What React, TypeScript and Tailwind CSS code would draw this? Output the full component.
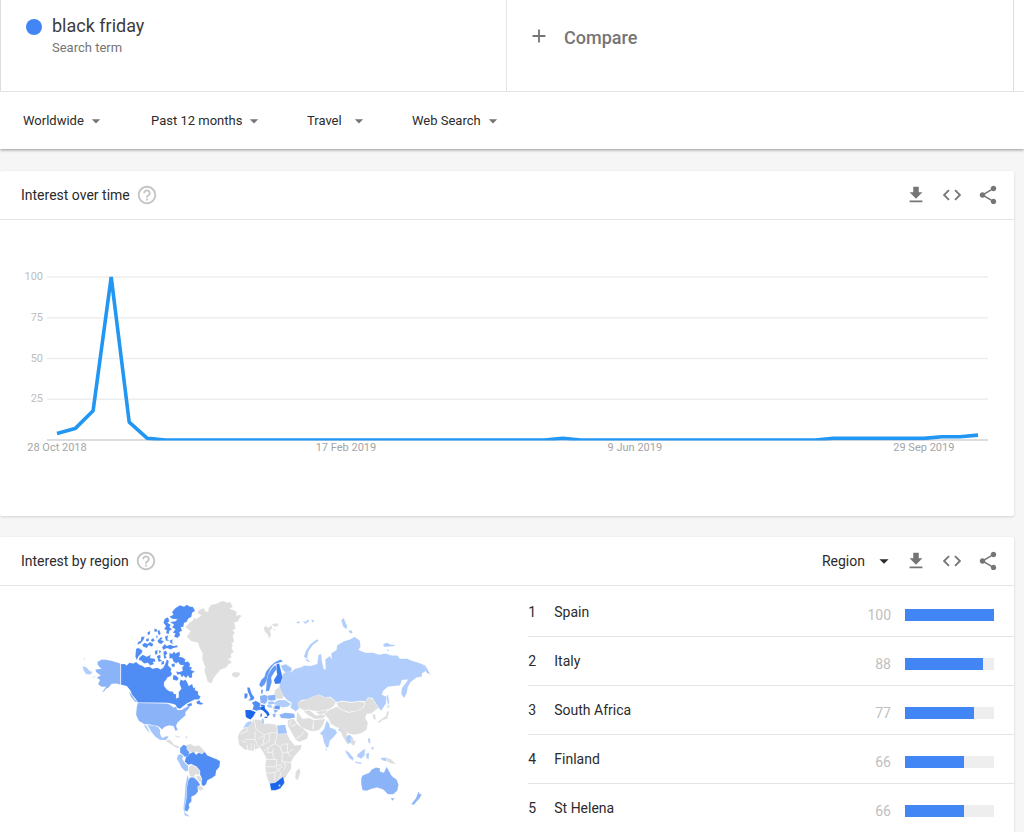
import type { ReactNode } from "react";
import {
  MdAdd,
  MdArrowDropDown,
  MdCode,
  MdGetApp,
  MdHelpOutline,
  MdShare,
} from "react-icons/md";

interface RegionRow {
  name: string;
  value: number;
}

const REGIONS: RegionRow[] = [
  { name: "Spain", value: 100 },
  { name: "Italy", value: 88 },
  { name: "South Africa", value: 77 },
  { name: "Finland", value: 66 },
  { name: "St Helena", value: 66 },
];

const FILTERS = [
  { id: "geo", label: "Location", value: "Worldwide" },
  { id: "time", label: "Time range", value: "Past 12 months" },
  { id: "category", label: "Category", value: "Travel" },
  { id: "property", label: "Search type", value: "Web Search" },
];

// Weekly interest, 28 Oct 2018 onwards. Weeks not listed are 0.
const WEEKS = 52;
const INTEREST: Record<number, number> = {
  0: 4, 1: 7, 2: 18, 3: 100, 4: 11, 5: 1,
  28: 1,
  43: 1, 44: 1, 45: 1, 46: 1, 47: 1, 48: 1, 49: 2, 50: 2, 51: 3,
};

const X_LABELS = [
  { week: 0, text: "28 Oct 2018" },
  { week: 16, text: "17 Feb 2019" },
  { week: 32, text: "9 Jun 2019" },
  { week: 48, text: "29 Sep 2019" },
];

const weekX = (week: number) => 57 + (week * 921) / (WEEKS - 1);
const valueY = (value: number) => 220 - value * 1.63;

function InterestChart() {
  const points = Array.from(
    { length: WEEKS },
    (_, i) => `${weekX(i).toFixed(1)},${valueY(INTEREST[i] ?? 0).toFixed(1)}`,
  ).join(" ");

  return (
    <svg
      viewBox="0 0 1014 296"
      className="block h-auto w-full font-['Roboto',sans-serif] text-[11px]"
      role="img"
      aria-label="Interest over time"
    >
      <clipPath id="plot">
        <rect x="0" y="0" width="1014" height="220.5" />
      </clipPath>
      {[25, 50, 75, 100].map((v) => (
        <g key={v}>
          <line x1="47" x2="988" y1={valueY(v)} y2={valueY(v)} stroke="#eeeeee" strokeWidth="1.5" />
          <text x="43" y={valueY(v) + 3} textAnchor="end" fill="#bdbdbd">
            {v}
          </text>
        </g>
      ))}
      <line x1="47" x2="988" y1="220" y2="220" stroke="#d2d2d2" strokeWidth="1.5" />
      <polyline
        points={points}
        fill="none"
        stroke="#2196f3"
        strokeWidth="3.6"
        strokeLinejoin="bevel"
        clipPath="url(#plot)"
      />
      {X_LABELS.map((l) => (
        <text key={l.text} x={weekX(l.week)} y="231" textAnchor="middle" fill="#a5a5a5">
          {l.text}
        </text>
      ))}
    </svg>
  );
}

interface Land {
  fill: string;
  shapes: string[];
}

const AMERICAS: Land[] = [
  {
    // Greenland, Central America and the unranked south
    fill: "#dedede",
    shapes: [
      "358,98 366,94 372,84 380,86 394,76 382,70 384,62 400,54 406,64 414,66 416,54 424,44 438,42 448,36 460,33 470,38 480,36 488,50 478,56 490,60 500,66 498,78 508,74 515,78 508,84 504,94 492,98 497,116 488,120 494,130 488,136 492,156 484,160 488,166 484,174 491,186 482,192 484,204 474,206 486,218 476,222 468,232 450,240 438,254 430,266 424,280 412,274 408,258 402,240 406,232 402,222 396,206 398,190 388,172 384,158 364,154 350,140 362,124 346,112",
      "486,250 494,246 510,248 508,256 498,262 488,258",
      "286,452 298,448 306,454 312,464 322,466 330,474 320,474 308,466 298,460",
      "314,436 330,440 328,444 316,440",
      "350,464 362,462 372,468 388,466 404,484 404,490 392,490 378,484 370,492 362,486 350,482",
      "356,530 366,524 382,534 390,544 388,554 376,552 370,562 360,558 356,546",
      "378,560 386,556 396,566 396,578 384,572",
      "384,586 396,588 400,598 390,602 382,596",
    ],
  },
  {
    fill: "#4f8cf3",
    shapes: [
      // mainland Canada
      "153,222 164,222 170,226 178,218 190,220 198,216 208,224 218,228 224,232 238,230 248,236 262,233 272,238 280,232 286,220 290,208 296,212 294,226 304,236 302,244 306,250 302,258 292,262 288,270 282,276 282,288 290,298 300,304 308,304 312,312 318,312 318,325 326,322 326,306 334,296 328,280 332,268 340,272 346,268 352,278 356,288 366,282 370,294 376,292 374,300 384,304 384,314 392,320 386,328 374,328 362,334 350,340 342,346 330,356 322,354 316,344 304,340 290,338 204,337 196,326 186,314 180,300 170,288 153,284",
      "378,336 388,330 390,336 400,340 394,344 382,342",
      "350,344 364,338 366,346 356,350",
      // Baffin and its neighbours
      "298,188 306,192 312,184 316,190 328,184 330,194 326,200 338,202 346,208 344,216 354,214 360,222 358,230 366,232 362,240 374,244 366,250 366,262 358,264 354,256 348,264 340,256 336,262 330,252 322,254 318,244 328,246 338,242 336,232 342,226 330,224 324,216 318,220 310,214 306,204 298,206",
      "304,222 314,220 314,230 306,230",
      // Victoria and Banks
      "198,176 206,174 218,182 214,190 206,198 200,210 196,200",
      "208,202 218,194 230,200 242,194 240,204 254,206 256,214 248,216 252,222 240,226 234,218 222,220 214,212 206,210",
      // Ellesmere, Axel Heiberg
      "306,66 316,54 330,46 342,50 350,44 360,50 368,50 375,62 366,68 364,80 354,86 350,96 342,98 340,110 332,112 336,122 328,126 330,136 322,144 312,140 316,130 308,128 316,118 306,112 312,104 300,96 316,94 322,88 306,86 298,80 310,74",
      "284,86 294,82 298,94 292,98 302,104 298,112 306,118 298,122 296,132 288,130 290,120 282,118 288,108 280,98",
      // small islands
      "204,156 212,152 214,140 224,140 220,150 212,160 202,164",
      "216,164 224,158 232,162 240,156 250,162 246,170 236,166 230,174 220,170",
      "228,148 236,144 236,154 228,154",
      "232,128 240,122 240,132 234,136",
      "252,116 260,118 262,124 254,126",
      "262,122 268,120 272,132 266,136",
      "242,150 250,144 254,152 246,156",
      "258,136 264,140 260,146",
      "262,152 272,142 278,144 272,150 282,154 274,162 266,160",
      "284,140 294,136 292,148 298,152 288,152",
      "276,172 284,162 290,168 300,164 310,168 322,166 322,172 310,174 302,178 290,174 280,180",
      "254,184 262,178 262,192 256,194",
      "260,198 270,194 272,202 268,206 276,212 266,216",
      "280,184 288,182 292,190 286,196 290,204 282,206",
      "298,152 308,148 306,158 312,162 302,160",
      "266,180 274,184 268,190",
      "274,216 282,212 282,222 274,224",
      "310,254 320,258 326,266 320,272 308,268",
      // Brazil
      "356,492 370,486 378,494 386,488 396,492 404,486 412,496 430,504 442,508 450,514 448,530 438,542 436,556 424,564 412,570 408,582 400,588 394,582 396,566 390,554 390,542 380,530 364,522 354,524 344,514 348,500",
    ],
  },
  {
    fill: "#619af6",
    shapes: [
      "330,474 340,464 350,468 350,478 358,486 354,500 344,500 336,492 330,488",
      "360,562 372,562 384,574 390,584 382,590 384,604 376,614 364,620 364,634 356,642 358,652 352,664 342,660 346,640 350,618 350,592 354,572",
    ],
  },
  {
    fill: "#8bb3f8",
    shapes: [
      // Alaska
      "82,216 95,208 108,209 124,212 151,220 151,284 138,280 124,282 116,292 108,296 104,302 95,308 108,290 94,290 84,282 90,270 80,262 92,256 78,246 76,238 94,236 84,226",
      // contiguous US
      "203,339 290,340 300,344 310,352 318,350 322,360 334,360 350,350 362,346 354,358 346,366 346,376 332,388 322,398 318,408 323,420 316,422 310,408 296,406 284,410 276,418 264,408 250,406 240,403 222,402 206,392 198,374 200,352",
      "176,306 182,310 194,328 202,336 196,336 184,322",
    ],
  },
  {
    fill: "#a4c5fa",
    shapes: [
      "232,404 250,407 264,410 270,420 270,432 276,444 290,438 296,440 288,450 270,450 256,440 244,426",
      "220,402 230,408 240,430 232,422",
      "324,494 334,492 340,500 336,506 346,520 354,526 354,542 346,544 334,532 326,516 320,506",
      "352,554 356,566 350,592 350,618 344,644 344,666 352,674 360,680 344,676 340,654 344,618 346,586",
    ],
  },
  {
    fill: "#b0cdfb",
    shapes: ["38,228 50,232 58,242 68,246 60,254 48,252 40,240", "66,262 76,258 74,262", "40,204 46,206 44,210", "346,438 354,442 348,444"],
  },
];

const OLD_WORLD: Land[] = [
  {
    fill: "#b0cdfb",
    shapes: [
      // Russia
      "166,228 182,222 200,234 196,248 210,236 226,232 238,226 256,228 276,222 280,194 288,192 290,212 296,238 302,236 300,208 314,198 320,208 318,190 334,180 336,166 356,154 376,148 388,140 404,152 406,170 400,180 420,188 444,188 462,194 480,190 500,196 516,196 524,206 546,206 560,212 580,218 600,226 606,240 590,250 590,260 574,262 556,276 548,290 544,310 536,324 528,312 530,294 544,276 548,268 530,270 524,286 506,288 488,290 474,302 470,314 484,320 482,340 468,362 460,352 452,340 442,324 428,322 420,334 404,332 380,336 352,332 334,336 316,320 300,322 282,314 262,320 248,328 228,330 220,340 222,354 212,364 196,352 200,338 186,330 174,316 166,302 162,288 170,272 172,252 180,248",
      "236,200 242,182 256,162 276,148 280,152 262,166 250,184 246,206",
      "240,206 248,208 256,216 246,214",
      "348,90 356,84 360,96 366,108 364,118 354,110",
      "370,120 380,122 382,130 374,130",
      "214,96 222,94 224,100 216,100",
      "232,92 240,96 250,88 252,94 240,102",
      "258,88 268,92 262,98",
      "474,162 486,158 496,164 508,164 508,168 488,170 476,170",
      "484,178 492,180 488,184",
      "594,226 604,232 616,254 604,248",
      "484,318 488,314 492,336 488,346",
      // Ukraine
      "142,340 160,330 180,330 198,342 188,350 172,352 158,346",
      // India
      "304,392 312,400 314,412 330,418 336,428 326,440 314,452 310,470 304,474 296,456 292,436 284,430 296,418",
      "338,420 350,410 358,412 346,424",
      // Morocco
      "54,414 64,398 78,392 80,402 70,410",
      // southeast Asia
      "362,438 374,434 384,446 380,456 368,462 362,452",
      "358,480 370,486 384,502 384,512 372,504",
      "390,514 410,518 406,522 390,518",
      "396,494 410,482 420,476 418,496 408,506 396,500",
      "422,492 432,488 430,508 424,504",
      "428,446 434,444 436,460 430,458",
      "436,474 446,470 444,480",
      "466,504 484,502 484,514 470,510",
    ],
  },
  {
    fill: "#dedede",
    shapes: [
      // Svalbard, Iceland
      "116,112 124,108 130,114 138,106 142,114 134,122 138,134 132,146 128,134 118,124",
      "140,102 158,100 160,108 148,110",
      "144,118 150,116 150,122",
      "20,252 28,248 44,250 42,258 32,262 22,258",
      // Kazakhstan, Mongolia, China
      "218,336 246,328 262,320 282,314 300,322 316,322 332,336 326,348 310,358 296,360 280,364 264,362 250,358 238,362 228,356 220,352",
      "334,338 352,334 380,338 404,334 418,338 414,352 396,362 370,366 350,358 338,350",
      "312,360 334,350 350,360 370,368 398,362 416,352 420,334 428,324 442,326 452,340 460,354 448,362 438,370 424,372 420,384 428,398 424,420 406,430 388,434 370,430 356,418 336,412 318,402 310,386 298,372",
      // central and western Asia
      "236,364 252,360 272,376 290,374 304,376 290,386 268,386 250,376",
      "272,366 294,362 308,360 300,370 284,374",
      "216,364 232,386 252,384 266,390 262,408 264,424 246,420 230,412 214,392",
      "266,390 286,388 300,386 294,404 282,420 264,424",
      "188,390 206,386 216,402 232,414 250,430 246,446 224,456 212,450 200,428 188,408",
      "344,420 358,414 366,430 362,446 370,468 360,452 352,438",
      "376,444 392,454 386,468 378,462",
      "148,302 162,290 170,306 176,318 172,326 154,326 148,316",
      "142,350 158,350 160,358 144,360",
      // Koreas, Japan
      "442,372 450,374 452,390 444,386",
      "484,346 494,346 492,352 486,354",
      "486,362 492,366 488,378 486,386 472,390 464,398 456,396 470,386 482,378",
      // Papua
      "484,504 496,506 512,522 498,520 486,514",
      // Africa
      "54,416 70,410 86,388 108,390 116,402 132,400 154,404 156,432 186,432 194,448 208,466 230,464 226,478 206,500 198,516 198,536 188,550 180,564 160,568 148,578 134,582 124,558 120,530 124,506 114,486 104,472 82,482 58,478 42,464 38,440 44,426",
      "212,544 222,534 226,544 218,570 210,564",
    ],
  },
  {
    fill: "#8bb3f8",
    shapes: [
      // Australia
      "408,564 412,556 432,548 440,538 452,532 464,534 464,544 476,548 484,530 492,544 500,558 514,568 520,584 516,602 504,612 488,612 474,598 456,592 440,596 424,602 412,600 408,582",
      "496,624 508,624 502,632",
      // New Zealand
      "580,604 584,612 590,612 582,626 574,634 566,644 558,642 572,624",
      // Germany and Poland
      "104,318 118,314 128,318 126,334 120,342 106,338",
      "128,316 150,314 152,330 138,332 128,330",
      // Bulgaria, Greece
      "146,360 158,360 156,366 148,368",
      "142,372 152,370 150,382 144,380",
      // Turkey
      "162,374 180,368 206,370 210,382 192,386 168,384",
    ],
  },
  {
    fill: "#a4c5fa",
    shapes: [
      "156,406 180,404 186,430 158,432",
      "110,386 116,386 116,402 110,398",
      "128,334 146,334 148,342 130,344",
      "124,344 138,344 142,354 130,352",
      "168,226 180,224 196,232 200,242 184,246 172,240",
      "300,476 306,478 304,482",
    ],
  },
  {
    fill: "#619af6",
    shapes: [
      // Norway and Sweden
      "102,284 108,270 118,260 122,246 136,228 150,216 166,208 174,214 160,218 148,222 136,236 128,256 124,272 118,284 108,292",
      "125,270 129,254 139,236 150,224 155,236 148,246 138,262 140,276 132,302 122,304",
      "148,346 164,346 164,358 148,356",
      "108,300 114,298 112,312 108,310",
    ],
  },
  {
    fill: "#4f8cf3",
    shapes: [
      // UK and Ireland, France
      "66,292 74,292 76,300 80,312 88,322 84,330 70,332 76,324 72,314 68,304",
      "58,310 68,310 66,324 58,326",
      "80,338 92,332 106,340 104,350 108,358 94,362 82,358 86,346",
    ],
  },
  {
    fill: "#3a7df0",
    shapes: [
      // Finland, Switzerland
      "154,222 162,220 168,244 172,262 166,280 150,282 146,270 156,254 154,238",
      "106,344 118,344 120,350 108,350",
    ],
  },
  {
    fill: "#1b66ea",
    shapes: [
      // Spain, Italy, South Africa
      "60,360 76,360 92,366 84,380 76,388 66,384 62,380",
      "104,352 118,347 120,356 130,366 134,374 126,380 124,372 114,362 106,358",
      "118,380 128,380 126,384 118,384",
      "106,372 110,370 110,380 106,380",
      "134,580 150,578 160,570 174,560 178,578 166,594 152,600 138,600",
    ],
  },
];

// Country borders drawn over the land that shares one fill.
const BORDERS =
  "M66 412v12l-22 8M88 390l4 26 26 18 16-6 22 0M60 448h30v-24M90 448l8 22M98 446l20-10M118 436l-4 26-12 8M134 430l-2 22-18 12M156 432l-6 28-18 10-16 14M150 460l14 10 10-8 16 0M132 470l-6 18 16-2 4-12M164 470l8 18-2 26 28 4M142 486l4 22-22 0M172 488l16 0 16-10M188 460l-2 26 12 14M146 508l8 0 0 20 16-4M120 530h30l10 8 14-10M124 550l28-4 8-8M150 546l-2 24M160 538l8 12-6 14M174 514l8 12-6 14M66 464l2 16M78 460l0 20M88 462l0 18M50 452l14 6M214 402l-16 8M208 448l20-12 10-14M196 392l-2 14";

function Landmass({ lands }: { lands: Land[] }) {
  return (
    <>
      {lands.map((land, i) => (
        <g key={i} fill={land.fill} stroke="#ffffff" strokeOpacity="0.4" strokeWidth="1" strokeLinejoin="round">
          {land.shapes.map((points) => (
            <polygon key={points} points={points} />
          ))}
        </g>
      ))}
    </>
  );
}

function WorldMap() {
  return (
    <svg viewBox="0 0 1095 726" className="block h-auto w-full" role="img" aria-label="Interest by region map">
      <Landmass lands={AMERICAS} />
      <g transform="translate(465 0)">
        <Landmass lands={OLD_WORLD} />
        <path d={BORDERS} fill="none" stroke="#f6f6f6" strokeWidth="2.5" />
        <circle cx="163" cy="586" r="3" fill="#dedede" />
      </g>
    </svg>
  );
}

function Dropdown({ id, label, value }: { id: string; label: string; value: string }) {
  return (
    <select
      id={id}
      aria-label={label}
      defaultValue={value}
      className="field-sizing-content min-w-10 cursor-pointer appearance-none bg-transparent focus:outline-none"
    >
      <option>{value}</option>
    </select>
  );
}

function Card({ title, tools, children }: { title: string; tools?: ReactNode; children: ReactNode }) {
  return (
    <section className="mr-[10px] rounded-xs bg-white shadow-[0_1px_3px_rgba(0,0,0,0.14)]">
      <header className="flex h-[49px] items-center justify-between border-b border-[#e4e4e4] pr-[15px] pl-[21px]">
        <div className="flex items-center gap-1.5">
          <h2 className="text-sm">{title}</h2>
          <button type="button" aria-label={`Help: ${title}`} className="text-[#c4c4c4]">
            <MdHelpOutline size={22} />
          </button>
        </div>
        <div className="flex items-center gap-3.5 text-[#757575]">
          {tools}
          <button type="button" aria-label="Download">
            <MdGetApp size={22} />
          </button>
          <button type="button" aria-label="Embed">
            <MdCode size={22} />
          </button>
          <button type="button" aria-label="Share">
            <MdShare size={22} />
          </button>
        </div>
      </header>
      {children}
    </section>
  );
}

export default function App() {
  return (
    <div className="h-screen overflow-hidden bg-[#f6f6f6] font-['Roboto',sans-serif] text-[#2b2b2b]">
      <div className="bg-white shadow-[0_1px_3px_rgba(0,0,0,0.4)]">
        <div className="border-b border-[#e4e4e4]">
          <div className="mr-[10px] grid h-[91px] grid-cols-2 border-x border-[#dedede]">
            <div className="flex items-start gap-[10px] border-r border-[#e4e4e4] pt-4 pl-[25px]">
              <span className="mt-[3px] size-4 rounded-full bg-[#4285f4]" />
              <div>
                <h1 className="text-lg leading-5 text-[#3c3c3c]">black friday</h1>
                <p className="mt-1 text-[13px] leading-4 text-[#757575]">Search term</p>
              </div>
            </div>
            <button
              type="button"
              className="flex items-start gap-3.5 self-start pt-[25px] pl-[21px] text-lg leading-[26px] font-medium text-[#757575]"
            >
              <MdAdd size={22} />
              Compare
            </button>
          </div>
        </div>
        <div className="grid h-[57px] grid-cols-[128px_156px_105px_auto] items-center pl-[23px] text-[13px]">
          {FILTERS.map((f) => (
            <label key={f.id} htmlFor={f.id} className="flex items-center gap-0.5">
              <Dropdown {...f} />
              <MdArrowDropDown size={20} className="text-[#757575]" />
            </label>
          ))}
        </div>
      </div>

      <main className="mt-[22px] flex flex-col gap-[21px]">
        <Card title="Interest over time">
          <InterestChart />
        </Card>

        <Card
          title="Interest by region"
          tools={
            <label htmlFor="resolution" className="-mr-1 flex items-center gap-2 text-sm text-[#2b2b2b]">
              <Dropdown id="resolution" label="Resolution" value="Region" />
              <MdArrowDropDown size={22} />
            </label>
          }
        >
          <div className="grid grid-cols-[52fr_48fr]">
            <div className="pt-1 pr-[92px] pl-[70px]">
              <WorldMap />
            </div>
            <ol className="pt-0.5 pl-px text-sm">
              {REGIONS.map((r, i) => (
                <li
                  key={r.name}
                  className="flex h-[49px] items-center border-b border-[#e4e4e4] last:border-transparent"
                >
                  <span className="w-[26px]">{i + 1}</span>
                  <span className="flex-1">{r.name}</span>
                  <div className="flex items-center gap-3.5 pt-1.5 pr-5">
                    <span className="text-[#c0c0c0]">{r.value}</span>
                    <div className="h-3 w-[89px] bg-[#eeeeee]">
                      <div className="h-full bg-[#4285f4]" style={{ width: `${r.value}%` }} />
                    </div>
                  </div>
                </li>
              ))}
            </ol>
          </div>
        </Card>
      </main>
    </div>
  );
}
